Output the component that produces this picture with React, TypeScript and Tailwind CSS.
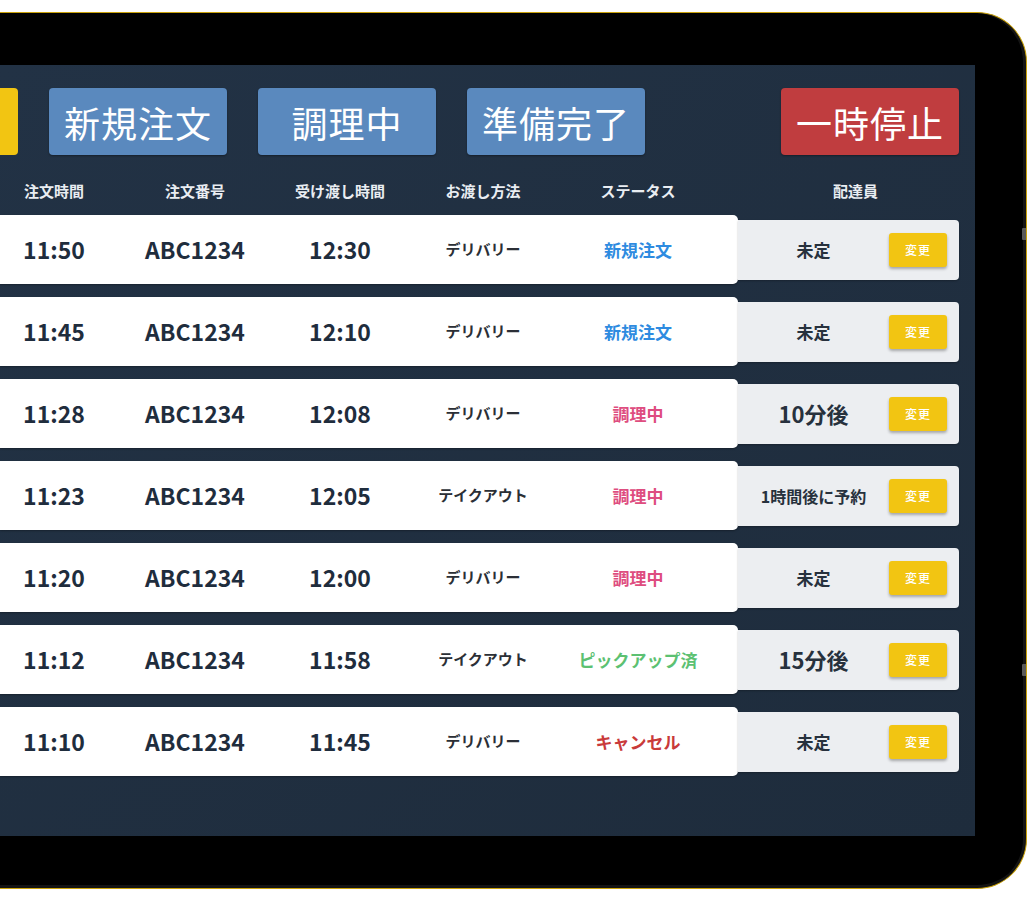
import React from "react";

type Row = {
  orderTime: string;
  orderNo: string;
  handover: string;
  method: string;
  status: string;
  statusColor: string;
  driver: string;
  driverSize: string;
};

const rows: Row[] = [
  { orderTime: "11:50", orderNo: "ABC1234", handover: "12:30", method: "デリバリー", status: "新規注文", statusColor: "text-[#2e8be0]", driver: "未定", driverSize: "text-[17px]" },
  { orderTime: "11:45", orderNo: "ABC1234", handover: "12:10", method: "デリバリー", status: "新規注文", statusColor: "text-[#2e8be0]", driver: "未定", driverSize: "text-[17px]" },
  { orderTime: "11:28", orderNo: "ABC1234", handover: "12:08", method: "デリバリー", status: "調理中", statusColor: "text-[#de4d80]", driver: "10分後", driverSize: "text-[22px]" },
  { orderTime: "11:23", orderNo: "ABC1234", handover: "12:05", method: "テイクアウト", status: "調理中", statusColor: "text-[#de4d80]", driver: "1時間後に予約", driverSize: "text-[16px]" },
  { orderTime: "11:20", orderNo: "ABC1234", handover: "12:00", method: "デリバリー", status: "調理中", statusColor: "text-[#de4d80]", driver: "未定", driverSize: "text-[17px]" },
  { orderTime: "11:12", orderNo: "ABC1234", handover: "11:58", method: "テイクアウト", status: "ピックアップ済", statusColor: "text-[#5cc172]", driver: "15分後", driverSize: "text-[22px]" },
  { orderTime: "11:10", orderNo: "ABC1234", handover: "11:45", method: "デリバリー", status: "キャンセル", statusColor: "text-[#c93a3a]", driver: "未定", driverSize: "text-[17px]" },
];

function TopButton({ label, color }: { label: string; color: string }) {
  return (
    <div
      className={`w-[178px] h-[67px] rounded-[4px] ${color} flex items-center justify-center text-white text-[36px] font-normal tracking-[1px] leading-none shadow-[0_1px_2px_rgba(0,0,0,0.35)]`}
    >
      {label}
    </div>
  );
}

function OrderRow({ row }: { row: Row }) {
  return (
    <div className="flex items-center h-[69px]">
      <div className="w-[738px] h-[69px] bg-white rounded-r-[5px] flex items-center shadow-[0_1px_2px_rgba(0,0,0,0.3)] text-[#1f2d3d]">
        <div className="w-[108px] text-center text-[23px] font-bold">{row.orderTime}</div>
        <div className="w-[174px] text-center text-[23px] font-bold">{row.orderNo}</div>
        <div className="w-[116px] text-center text-[23px] font-bold">{row.handover}</div>
        <div className="w-[170px] text-center text-[15px] font-bold text-[#2b2f36]">{row.method}</div>
        <div className={`w-[140px] text-center text-[17px] font-bold ${row.statusColor}`}>{row.status}</div>
      </div>
      <div className="w-[221px] h-[60px] bg-[#eceef1] rounded-r-[4px] flex items-center shadow-[0_1px_2px_rgba(0,0,0,0.25)]">
        <div className={`w-[151px] text-center font-bold text-[#27313d] ${row.driverSize}`}>{row.driver}</div>
        <div className="w-[58px] h-[34px] rounded-[3px] bg-[#f2c512] flex items-center justify-center text-white text-[12px] font-medium tracking-[1px] shadow-[0_2px_3px_rgba(0,0,0,0.3)]">
          変更
        </div>
      </div>
    </div>
  );
}

export default function App() {
  return (
    <div
      className="w-[1032px] h-[902px] bg-white overflow-hidden relative pt-[12px]"
      style={{ fontFamily: '"Noto Sans CJK JP", "Noto Sans", sans-serif' }}
    >
      <div className="w-[1027px] h-[877px] bg-black rounded-r-[50px] border-t border-r border-b border-[#c9a10a] pt-[52px] shadow-[inset_-3px_0_0_#141414,inset_0_-3px_0_#141414]">
        <div className="w-[975px] h-[771px] bg-gradient-to-br from-[#223245] to-[#1e2c3c] pt-[23px] pr-[16px]">
          <div className="flex items-center h-[67px]">
            <div className="w-[18px] h-[67px] rounded-r-[4px] bg-[#f2c512]" />
            <div className="flex gap-[31px] ml-[31px]">
              <TopButton label="新規注文" color="bg-[#5a89be]" />
              <TopButton label="調理中" color="bg-[#5a89be]" />
              <TopButton label="準備完了" color="bg-[#5a89be]" />
            </div>
            <div className="ml-auto">
              <TopButton label="一時停止" color="bg-[#c03d3f]" />
            </div>
          </div>

          <div className="flex pt-[28px] pb-[16px] text-[15px] font-bold text-[#e9edf2] leading-[16px]">
            <div className="w-[108px] text-center">注文時間</div>
            <div className="w-[174px] text-center">注文番号</div>
            <div className="w-[116px] text-center">受け渡し時間</div>
            <div className="w-[170px] text-center">お渡し方法</div>
            <div className="w-[140px] text-center">ステータス</div>
            <div className="w-[30px]" />
            <div className="w-[221px] text-center pl-[14px]">配達員</div>
          </div>

          <div className="flex flex-col gap-[13px]">
            {rows.map((r, i) => (
              <OrderRow key={i} row={r} />
            ))}
          </div>
        </div>
      </div>
      <div className="absolute left-[1022px] top-[228px] w-[4px] h-[12px] bg-[#5a5a5a] rounded-l-[1px]" />
      <div className="absolute left-[1022px] top-[664px] w-[4px] h-[12px] bg-[#5a5a5a] rounded-l-[1px]" />
    </div>
  );
}
